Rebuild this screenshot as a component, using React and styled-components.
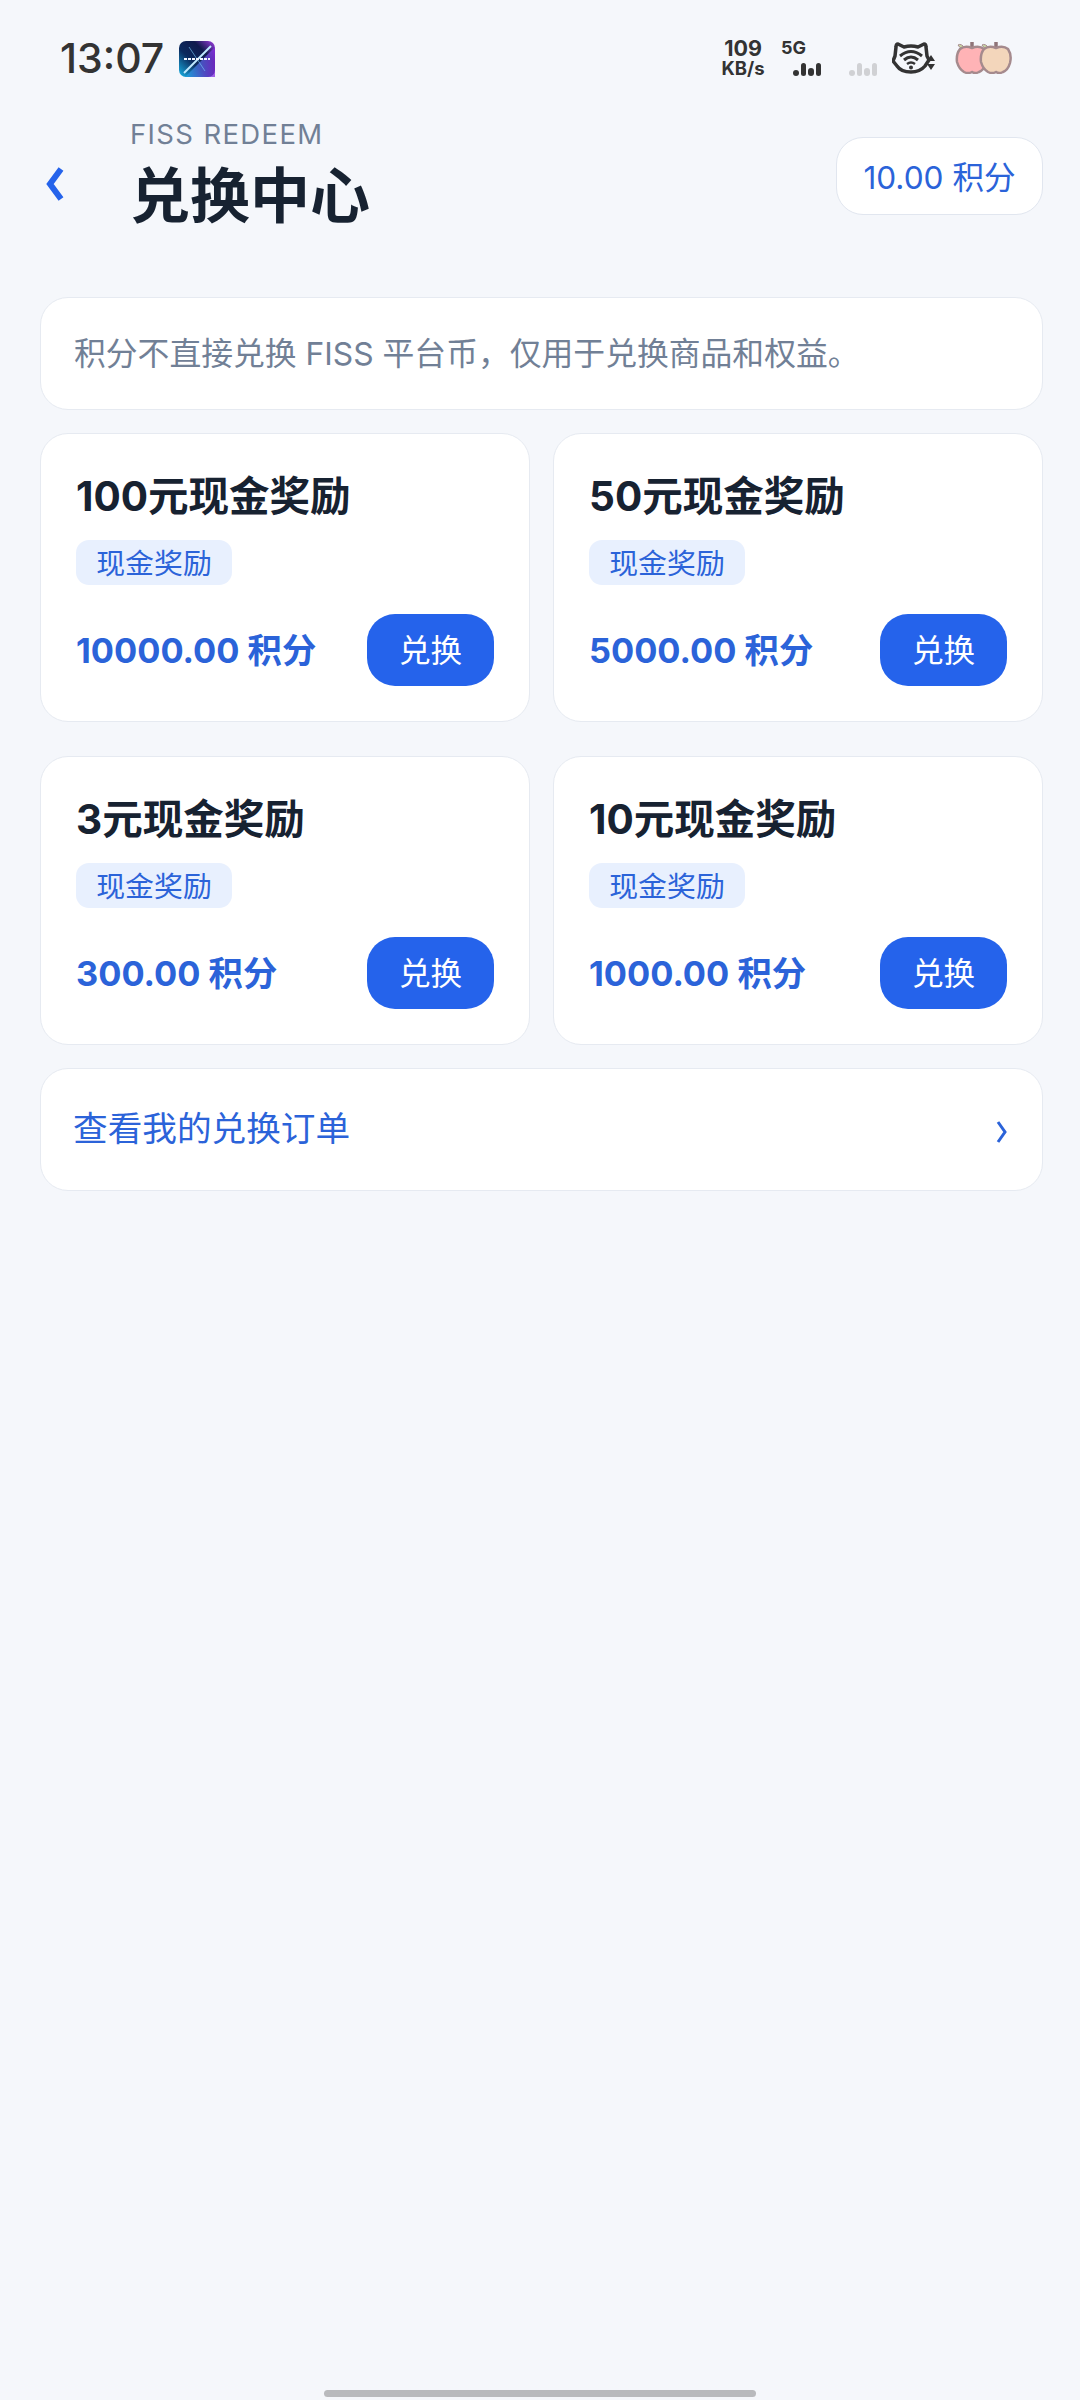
import styled, { createGlobalStyle } from "styled-components";

const GlobalStyle = createGlobalStyle`
  html, body {
    margin: 0;
    padding: 0;
    background: #f5f7fb;
  }
  * {
    box-sizing: border-box;
  }
`;

const Page = styled.div`
  width: 1080px;
  height: 2400px;
  display: flex;
  flex-direction: column;
  background: #f5f7fb;
  color: #172231;
  font-family: Inter, "Noto Sans CJK SC", sans-serif;
`;

const StatusBar = styled.div`
  height: 80px;
  padding: 36px 67px 0 60px;
  display: flex;
  align-items: flex-start;
`;

const Clock = styled.div`
  font-size: 41px;
  line-height: 44px;
  font-weight: 500;
  color: #333;
  width: 119px;
`;

const StatusRight = styled.div`
  margin-left: auto;
  display: flex;
  align-items: flex-start;
`;

const Speed = styled.div`
  width: 44px;
  margin-right: 16px;
  text-align: center;
  color: #333;
  font-weight: 700;
  font-size: 21.5px;
  line-height: 24px;
  & span {
    display: block;
    font-size: 18.5px;
    line-height: 16px;
    white-space: nowrap;
  }
`;

const Network = styled.div`
  width: 40px;
  margin-right: 28px;
  color: #333;
  font-weight: 700;
  font-size: 18px;
  line-height: 24px;
`;

const Bars = styled.div`
  display: flex;
  align-items: flex-end;
  gap: 2px;
  height: 13px;
  margin: ${(p) => (p.$faded ? "27px 15px 0 0" : "3px 0 0 12px")};
`;

const Bar = styled.i`
  display: block;
  width: 5.5px;
  height: ${(p) => p.$h}px;
  border-radius: 3px;
  background: ${(p) => (p.$faded ? "#d0d1d4" : "#333")};
`;

const Header = styled.header`
  height: 137px;
  padding: 0 37px 0 46px;
  display: flex;
  align-items: flex-start;
`;

const BackIcon = styled.svg`
  width: 18px;
  height: 36px;
  margin-top: 86px;
  flex: none;
`;

const TitleBlock = styled.div`
  margin-left: 66px;
  padding-top: 37px;
`;

const Eyebrow = styled.div`
  font-size: 27.5px;
  line-height: 34px;
  letter-spacing: 1.35px;
  color: #718096;
  white-space: nowrap;
`;

const Title = styled.h1`
  margin: 12px 0 0;
  font-size: 60px;
  line-height: 66px;
  font-weight: 700;
  color: #172231;
`;

const PointsPill = styled.div`
  margin: 57px 0 0 auto;
  width: 207px;
  height: 78px;
  padding-bottom: 3px;
  border: 1px solid #e1e6ef;
  border-radius: 27px;
  background: #fff;
  color: #2b63d9;
  font-size: 31.6px;
  display: flex;
  align-items: center;
  justify-content: center;
  white-space: nowrap;
`;

const Content = styled.main`
  padding: 0 37px 0 40px;
  margin-top: 80px;
  display: flex;
  flex-direction: column;
  gap: 23px;
`;

const Panel = styled.div`
  background: #fff;
  border: 1px solid #e6eaf1;
  border-radius: 28px;
`;

const Notice = styled(Panel)`
  height: 113px;
  padding: 0 33px 6px;
  display: flex;
  align-items: center;
  font-size: 31.8px;
  color: #718096;
`;

const Grid = styled.div`
  display: grid;
  grid-template-columns: 490px 490px;
  column-gap: 23px;
  row-gap: 34px;
`;

const Card = styled(Panel)`
  height: 289px;
  padding: 38px 35px 0 35px;
`;

const CardTitle = styled.div`
  font-size: 40.5px;
  line-height: 50px;
  font-weight: 700;
  color: #172231;
`;

const Tag = styled.div`
  margin-top: 18px;
  width: 156px;
  height: 45px;
  padding-bottom: 4px;
  border-radius: 13px;
  background: #e8f0fe;
  color: #2b63d9;
  font-size: 28.9px;
  display: flex;
  align-items: center;
  justify-content: center;
`;

const CardFooter = styled.div`
  margin-top: 29px;
  display: flex;
  align-items: center;
  justify-content: space-between;
`;

const Price = styled.div`
  font-size: 34.4px;
  font-weight: 700;
  color: #2b63d9;
  white-space: nowrap;
  padding-bottom: 5px;
`;

const RedeemButton = styled.button`
  width: 127px;
  height: 72px;
  padding: 0 0 4px;
  border: 0;
  border-radius: 28px;
  background: #2563eb;
  color: #fff;
  font-family: inherit;
  font-size: 31.6px;
`;

const OrderLink = styled(Panel)`
  height: 123px;
  padding: 0 34px 7px 32px;
  display: flex;
  align-items: center;
  justify-content: space-between;
  color: #2b63d9;
  font-size: 34.65px;
`;

const MoreIcon = styled.svg`
  width: 12px;
  height: 22px;
  margin-top: 11px;
`;

const HomeBar = styled.div`
  width: 432px;
  height: 7px;
  margin: auto auto 3px;
  border-radius: 4px;
  background: #b9babd;
`;

const AppBadge = () => (
  <svg width="36" height="36" viewBox="0 0 36 36" style={{ marginTop: 5 }}>
    <defs>
      <linearGradient id="badgeBg" x1="0" y1="1" x2="1" y2="0">
        <stop offset="0" stopColor="#19b6e8" />
        <stop offset="0.4" stopColor="#0b2a5e" />
        <stop offset="0.7" stopColor="#101a4c" />
        <stop offset="1" stopColor="#a23de8" />
      </linearGradient>
      <linearGradient id="badgeBottom" x1="0" y1="0" x2="1" y2="0">
        <stop offset="0" stopColor="#1aa5e0" />
        <stop offset="1" stopColor="#8a2be2" />
      </linearGradient>
    </defs>
    <rect width="36" height="36" rx="7" fill="url(#badgeBg)" />
    <path d="M6 36 L36 6 L36 36 Z" fill="url(#badgeBottom)" opacity="0.75" />
    <path d="M5 32 L32 5" stroke="#bfe9ff" strokeWidth="2" />
    <path d="M10 6 L26 30" stroke="#7fd0ff" strokeWidth="1" opacity="0.6" />
    <path d="M5 18 H31" stroke="#f2f6ff" strokeWidth="2" strokeDasharray="3 1" />
  </svg>
);

const CatWifi = () => (
  <svg width="44" height="32" viewBox="0 0 44 32" style={{ marginTop: 6, marginRight: 19 }}>
    <path
      d="M6 2 L12 5 Q19 3 26 5 L32 2 Q34 2 34 5 L35 14 L37 18 L33 24 Q28 30 19 30 Q9 30 5 24 L1 19 L3 14 L4 5 Q4 2 6 2 Z"
      fill="none"
      stroke="#333"
      strokeWidth="3.5"
      strokeLinejoin="round"
    />
    <path d="M8 14 Q19 5 30 14" fill="none" stroke="#333" strokeWidth="3" />
    <path d="M12 18 Q19 12 26 18" fill="none" stroke="#333" strokeWidth="3" />
    <path d="M15 22 Q19 19 23 22" fill="none" stroke="#333" strokeWidth="2.5" />
    <circle cx="19" cy="25.5" r="2" fill="#333" />
    <path d="M39 13 L43 19 H35 Z M35 22 H43 L39 28 Z" fill="#333" />
  </svg>
);

const Apple = ({ fill, x }) => (
  <g transform={`translate(${x} 0)`}>
    <path d="M10 6 Q6 1 3 3 Q6 8 12 8 Z" fill="#c9d8a2" stroke="#a58a8d" strokeWidth="1" />
    <path d="M17 0 L17 7" stroke="#8f7478" strokeWidth="3.5" />
    <path
      d="M17 6 Q24 3 29 7 Q33 13 31 21 Q29 28 24 30 Q20 32 17 30 Q13 32 9 30 Q4 27 2 20 Q1 12 5 7 Q10 3 17 6 Z"
      fill={fill}
      stroke="#a58a8d"
      strokeWidth="2.5"
    />
  </g>
);

const Apples = () => (
  <svg width="58" height="32" viewBox="0 0 58 32" style={{ marginTop: 6 }}>
    <Apple fill="#ffb3b6" x={0} />
    <Apple fill="#f3d6bb" x={24} />
  </svg>
);

const rewards = [
  { name: "100元现金奖励", points: "10000.00" },
  { name: "50元现金奖励", points: "5000.00" },
  { name: "3元现金奖励", points: "300.00" },
  { name: "10元现金奖励", points: "1000.00" },
];

export default function App() {
  return (
    <Page>
      <GlobalStyle />
      <StatusBar>
        <Clock>13:07</Clock>
        <AppBadge />
        <StatusRight>
          <Speed>
            109
            <span>KB/s</span>
          </Speed>
          <Network>
            5G
            <Bars>
              <Bar $h={6} />
              <Bar $h={13} />
              <Bar $h={8} />
              <Bar $h={13} />
            </Bars>
          </Network>
          <Bars $faded>
            <Bar $faded $h={6} />
            <Bar $faded $h={13} />
            <Bar $faded $h={8} />
            <Bar $faded $h={13} />
          </Bars>
          <CatWifi />
          <Apples />
        </StatusRight>
      </StatusBar>

      <Header>
        <BackIcon viewBox="0 0 18 36">
          <path d="M15 3 L4 18 L15 33" fill="none" stroke="#2563eb" strokeWidth="6" />
        </BackIcon>
        <TitleBlock>
          <Eyebrow>FISS REDEEM</Eyebrow>
          <Title>兑换中心</Title>
        </TitleBlock>
        <PointsPill>10.00 积分</PointsPill>
      </Header>

      <Content>
        <Notice>积分不直接兑换 FISS 平台币，仅用于兑换商品和权益。</Notice>
        <Grid>
          {rewards.map((item) => (
            <Card key={item.name}>
              <CardTitle>{item.name}</CardTitle>
              <Tag>现金奖励</Tag>
              <CardFooter>
                <Price>{item.points} 积分</Price>
                <RedeemButton>兑换</RedeemButton>
              </CardFooter>
            </Card>
          ))}
        </Grid>
        <OrderLink>
          查看我的兑换订单
          <MoreIcon viewBox="0 0 12 22">
            <path d="M2 1 L9 11 L2 21" fill="none" stroke="#2b63d9" strokeWidth="3" />
          </MoreIcon>
        </OrderLink>
      </Content>

      <HomeBar />
    </Page>
  );
}
